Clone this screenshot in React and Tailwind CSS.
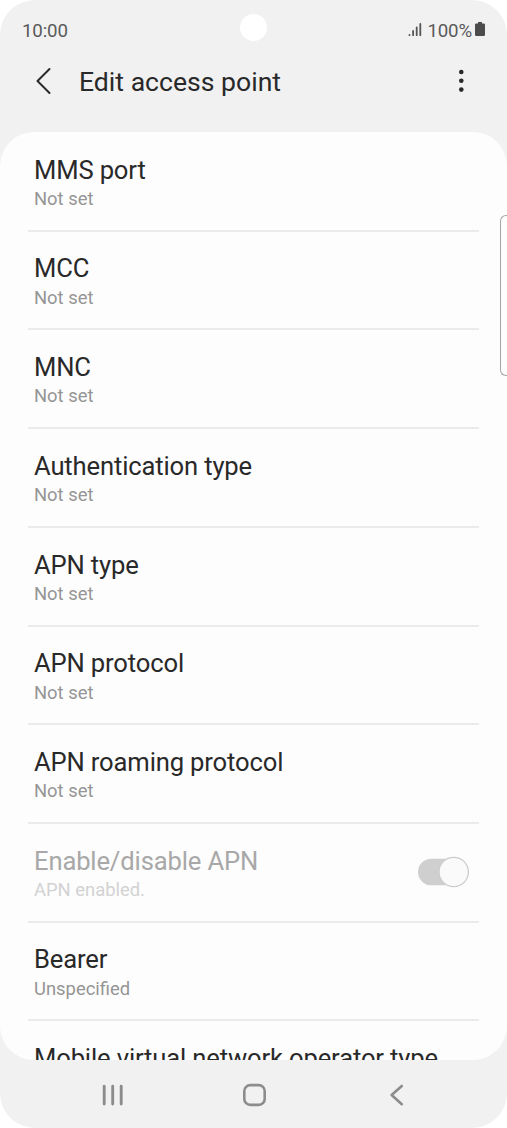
const settings = [
  { title: 'MMS port', value: 'Not set' },
  { title: 'MCC', value: 'Not set' },
  { title: 'MNC', value: 'Not set' },
  { title: 'Authentication type', value: 'Not set' },
  { title: 'APN type', value: 'Not set' },
  { title: 'APN protocol', value: 'Not set' },
  { title: 'APN roaming protocol', value: 'Not set' },
  { title: 'Enable/disable APN', value: 'APN enabled.', disabled: true, toggle: true },
  { title: 'Bearer', value: 'Unspecified' },
  { title: 'Mobile virtual network operator type' },
];

function StatusBar() {
  return (
    <div className="relative flex h-[58px] shrink-0 items-start justify-between pt-[19px] pr-[22px] pl-[22px] text-[18.7px] leading-[24px] tracking-[-0.15px] text-[#5a5a5a]">
      <span>10:00</span>
      <span className="absolute top-[14px] left-[240px] size-[27px] rounded-full bg-white" />
      <div className="flex">
        <svg className="mt-[3px] mr-[5px] h-[15px] w-[14px]" viewBox="0 0 14 15" stroke="#555555" strokeWidth="1.8" strokeLinecap="round">
          <path d="M1.5 13.2V12.8M5.1 13.2V9M8.7 13.2V5.5M12.3 13.2V2" />
        </svg>
        <span>100%</span>
        <svg className="mt-[2px] ml-[3px] h-[16px] w-[10px]" viewBox="0 0 10 16" fill="#4c4c4c">
          <path d="M3 1h4v1.5h1.8q1.2 0 1.2 1.2v10.1q0 1.2-1.2 1.2H1.2Q0 15 0 13.8V3.7q0-1.2 1.2-1.2H3z" />
        </svg>
      </div>
    </div>
  );
}

function Header() {
  return (
    <header className="flex h-[74px] shrink-0 items-start pt-[8px] pr-[39px] pl-[35px] text-[#292929]">
      <svg className="h-8 w-4" viewBox="0 0 16 32" fill="none" stroke="currentColor" strokeWidth="2" strokeLinecap="round" strokeLinejoin="round">
        <path d="M14.5 3L2.5 15L14.5 27" />
      </svg>
      <h1 className="ml-[28px] text-[26.6px] leading-8">Edit access point</h1>
      <svg className="ml-auto h-8 w-[14px]" viewBox="0 0 14 32" fill="currentColor">
        <circle cx="7.3" cy="6" r="2.3" />
        <circle cx="7.3" cy="14.8" r="2.3" />
        <circle cx="7.3" cy="23.6" r="2.3" />
      </svg>
    </header>
  );
}

function Toggle() {
  return (
    <svg className="mr-[8px] h-8 w-[54px]" viewBox="0 0 54 32">
      <rect x="1" y="2.7" width="50" height="26.6" rx="13.3" fill="#cfcfcf" />
      <circle cx="36.7" cy="16" r="14.7" fill="#fafafa" stroke="#cccccc" strokeWidth="1.3" />
    </svg>
  );
}

function Row({ title, value, disabled, toggle }) {
  return (
    <li className="flex h-[98.73px] shrink-0 items-start justify-between border-b-2 border-[#ebebeb] pl-[6px]">
      <div className={disabled ? 'pt-[20.7px] text-[#a8a8a8]' : 'pt-[20.7px] text-[#292929]'}>
        <div className="text-[25.6px] leading-8 tracking-[-0.15px] whitespace-nowrap">{title}</div>
        {value && (
          <div className={disabled ? 'pt-[1.3px] text-[18.4px] leading-6 text-[#d2d2d2]' : 'pt-[1.3px] text-[18.4px] leading-6 text-[#959595]'}>{value}</div>
        )}
      </div>
      {toggle && <div className="mt-[32px]"><Toggle /></div>}
    </li>
  );
}

function NavBar() {
  return (
    <nav className="flex h-[68px] shrink-0 items-center justify-between px-[96px]">
      <svg className="h-8 w-8" viewBox="0 0 32 32" fill="none" stroke="#8c8c8c" strokeWidth="2.9" strokeLinecap="round">
        <path d="M8.2 8.2V26M16.7 8.2V26M25.2 8.2V26" />
      </svg>
      <svg className="h-8 w-8" viewBox="0 0 32 32" fill="none" stroke="#8c8c8c" strokeWidth="2.6">
        <rect x="6.3" y="7.1" width="20.4" height="19.8" rx="6" />
      </svg>
      <svg className="h-8 w-8" viewBox="0 0 32 32" fill="none" stroke="#8c8c8c" strokeWidth="2.6" strokeLinecap="round" strokeLinejoin="round">
        <path d="M22.8 8L12.6 17L22.8 26.2" />
      </svg>
    </nav>
  );
}

export default function App() {
  return (
    <div className="bg-white">
      <div className="relative flex h-[1128px] w-[507px] flex-col overflow-hidden rounded-[35px] bg-[#f1f1f1] font-['Roboto',sans-serif]">
        <StatusBar />
        <Header />
        <main className="h-[928px] shrink-0 overflow-hidden rounded-[34px] bg-[#fdfdfd] px-[28px] pt-[1px]">
          <ul className="flex flex-col">
            {settings.map((s) => (
              <Row key={s.title} {...s} />
            ))}
          </ul>
        </main>
        <NavBar />
        <span className="absolute top-[215px] right-0 h-[161px] w-[7px] rounded-l-[6px] border border-r-0 border-[#a5a5a5]" />
      </div>
    </div>
  );
}
